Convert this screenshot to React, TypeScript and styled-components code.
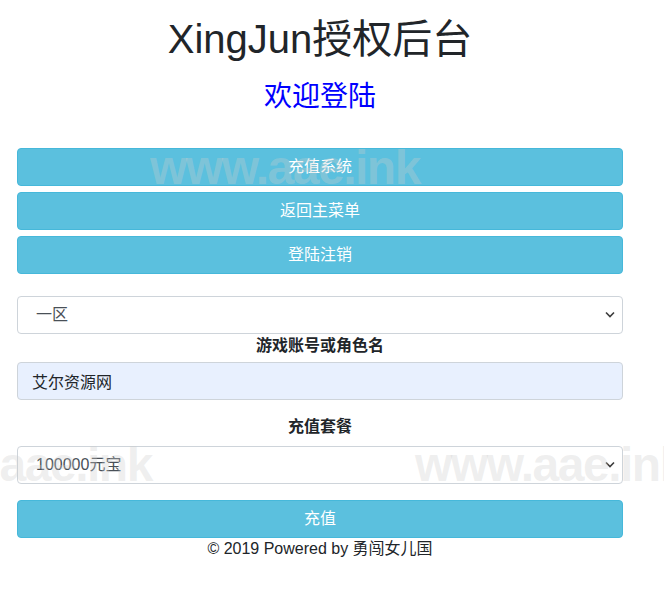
import React from 'react'
import styled, { createGlobalStyle } from 'styled-components'

const GlobalStyle = createGlobalStyle`
  html, body {
    margin: 0;
    padding: 0;
    background: #fff;
  }
  body {
    font-family: "Liberation Sans", Arial, "Noto Sans CJK SC", sans-serif;
    color: #212529;
    font-size: 16px;
  }
`

const Page = styled.div`
  position: relative;
  width: 664px;
  height: 612px;
  overflow: hidden;
  background: #fff;
`

const Container = styled.div`
  width: 606px;
  margin-left: 17px;
  display: flex;
  flex-direction: column;
`

const Title = styled.h1`
  margin: 15px 0 0;
  font-size: 40px;
  font-weight: 400;
  line-height: 1.2;
  text-align: center;
  color: #212529;
`

const Subtitle = styled.h3`
  margin: 17px 0 0;
  font-size: 28px;
  font-weight: 400;
  line-height: 1.2;
  text-align: center;
  color: #0000ff;
`

const ButtonStack = styled.div`
  display: flex;
  flex-direction: column;
  gap: 6px;
  margin-top: 34px;
`

const InfoButton = styled.button<{ $top?: number }>`
  display: block;
  width: 100%;
  height: 38px;
  margin-top: ${(p) => p.$top ?? 0}px;
  padding: 6px 12px;
  border: 1px solid #46b8da;
  border-radius: 4px;
  background: #5bc0de;
  color: #fff;
  font-family: inherit;
  font-size: 16px;
  line-height: 24px;
  cursor: pointer;
`

const SelectWrap = styled.div<{ $top?: number }>`
  position: relative;
  margin-top: ${(p) => p.$top ?? 0}px;
`

const Select = styled.select`
  display: block;
  width: 100%;
  height: 38px;
  margin: 0;
  padding: 6px 30px 6px 18px;
  border: 1px solid #ced4da;
  border-radius: 4px;
  background: #fff;
  color: #495057;
  font-family: inherit;
  font-size: 16px;
  line-height: 24px;
  appearance: none;
  -webkit-appearance: none;
`

const Chevron = styled.svg`
  position: absolute;
  right: 8px;
  top: 15px;
  width: 10px;
  height: 7px;
  pointer-events: none;
`

const Label = styled.label<{ $top?: number }>`
  display: block;
  margin-top: ${(p) => p.$top ?? 0}px;
  font-weight: 700;
  line-height: 24px;
  text-align: center;
  color: #212529;
`

const TextInput = styled.input`
  display: block;
  box-sizing: border-box;
  width: 100%;
  height: 38px;
  margin-top: 4px;
  padding: 6px 14px;
  border: 1px solid #ced4da;
  border-radius: 4px;
  background: #e8f0fe;
  color: #212529;
  font-family: inherit;
  font-size: 16px;
  line-height: 24px;
`

const Footer = styled.div`
  line-height: 22px;
  text-align: center;
  color: #212529;
`

const Watermark = styled.div<{ $x: number; $y: number }>`
  position: absolute;
  left: ${(p) => p.$x}px;
  top: ${(p) => p.$y}px;
  font-family: "Liberation Sans", Arial, sans-serif;
  font-size: 48px;
  font-weight: 700;
  line-height: 1;
  letter-spacing: -1.5px;
  white-space: nowrap;
  color: rgba(205, 205, 205, 0.32);
  pointer-events: none;
`

function DropSelect({ top, value, label }: { top?: number; value: string; label: string }) {
  return (
    <SelectWrap $top={top}>
      <Select defaultValue={value}>
        <option value={value}>{label}</option>
      </Select>
      <Chevron viewBox='0 0 10 7'>
        <path d='M1 1.5l4 4 4-4' fill='none' stroke='#3c3c3c' strokeWidth='1.6' />
      </Chevron>
    </SelectWrap>
  )
}

export default function App() {
  return (
    <Page>
      <GlobalStyle />
      <Container>
        <Title>XingJun授权后台</Title>
        <Subtitle>欢迎登陆</Subtitle>
        <ButtonStack>
          <InfoButton>充值系统</InfoButton>
          <InfoButton>返回主菜单</InfoButton>
          <InfoButton>登陆注销</InfoButton>
        </ButtonStack>
        <DropSelect top={22} value='1' label='一区' />
        <Label>游戏账号或角色名</Label>
        <TextInput defaultValue='艾尔资源网' />
        <Label $top={15}>充值套餐</Label>
        <DropSelect top={7} value='100000' label='100000元宝' />
        <InfoButton $top={16}>充值</InfoButton>
        <Footer>© 2019 Powered by 勇闯女儿国</Footer>
      </Container>
      <Watermark $x={150} $y={144}>www.aae.ink</Watermark>
      <Watermark $x={-118} $y={441}>www.aae.ink</Watermark>
      <Watermark $x={415} $y={441}>www.aae.ink</Watermark>
    </Page>
  )
}
